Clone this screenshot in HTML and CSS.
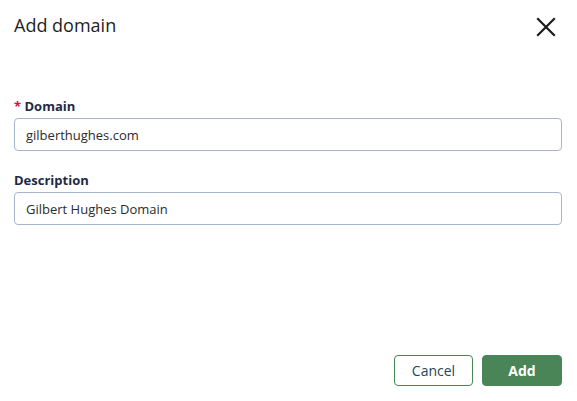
FILE: index.html
```html
<!DOCTYPE html>
<html lang="en">
<head>
    <meta charset="UTF-8">
    <meta name="viewport" content="width=device-width, initial-scale=1.0">
    <title>Add domain</title>
    <link rel="stylesheet" href="styles.css">
</head>
<body>

    <div class="dialog">
        <!-- Header -->
        <div class="dialog-header">
            <h1>Add domain</h1>
            <button class="close" aria-label="Close">
                <svg width="20" height="20" viewBox="0 0 20 20">
                    <path d="M2 2 L18 18 M18 2 L2 18" stroke="#1b1b1b" stroke-width="2.2" stroke-linecap="square" fill="none"/>
                </svg>
            </button>
        </div>

        <!-- Form fields -->
        <div class="dialog-body">
            <div class="field">
                <label for="domain"><span class="required">*</span> Domain</label>
                <input type="text" id="domain" value="gilberthughes.com">
            </div>
            <div class="field">
                <label for="description">Description</label>
                <input type="text" id="description" value="Gilbert Hughes Domain">
            </div>
        </div>

        <!-- Footer buttons -->
        <div class="dialog-footer">
            <button class="btn btn-secondary">Cancel</button>
            <button class="btn btn-primary">Add</button>
        </div>
    </div>

</body>
</html>
```

FILE: styles.css
```css
/* Page */
html, body {
    height: 100%;
    margin: 0;
    font-family: 'Open Sans', 'Noto Sans', sans-serif;
    background-color: #ffffff;
    color: #1f2a3c;
}

/* Dialog fills the window */
.dialog {
    height: 100%;
    box-sizing: border-box;
    padding: 12px 15px 15px 14px;
    display: flex;
    flex-direction: column;
}

.dialog-header {
    display: flex;
    justify-content: space-between;
    align-items: flex-start;
}

h1 {
    margin: 0;
    font-size: 18px;
    font-weight: 500;
    color: #1e1e1e;
    line-height: 26px;
}

.close {
    background: none;
    border: none;
    padding: 0;
    margin: 5px 6px 0 0;
    width: 20px;
    height: 20px;
    cursor: pointer;
}

.dialog-body {
    flex: 1;
    padding-top: 59px;
    display: flex;
    flex-direction: column;
    gap: 20px;
}

.field label {
    display: block;
    font-size: 13px;
    font-weight: 700;
    color: #1f2a44;
    line-height: 18px;
    margin-bottom: 3px;
}

.required {
    color: #d4143c;
}

.field input {
    display: block;
    width: 100%;
    height: 33px;
    box-sizing: border-box;
    padding: 0 11px;
    font-family: inherit;
    font-size: 13px;
    color: #2b2b2b;
    border: 1px solid #a7b6cc;
    border-radius: 4px;
    background-color: #fff;
    outline: none;
}

/* Footer */
.dialog-footer {
    display: flex;
    justify-content: flex-end;
    gap: 9px;
}

.btn {
    height: 31px;
    border-radius: 4px;
    font-family: inherit;
    font-size: 14px;
    cursor: pointer;
}

.btn-secondary {
    width: 79px;
    background-color: #fff;
    border: 1px solid #4a8557;
    color: #24465c;
}

.btn-primary {
    width: 80px;
    background-color: #4a8557;
    border: 1px solid #4a8557;
    color: #fff;
    font-weight: 700;
}
```
